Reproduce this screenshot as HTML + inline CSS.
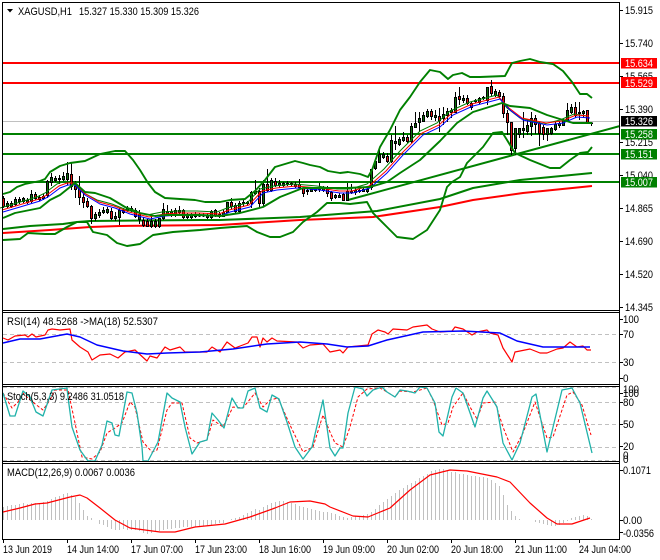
<!DOCTYPE html>
<html><head><meta charset="utf-8"><style>
html,body{margin:0;padding:0;background:#fff;width:660px;height:560px;overflow:hidden}
svg{display:block}
text{font-family:"Liberation Sans",sans-serif;font-size:11px;fill:#000}
.w{fill:#fff}
</style></head><body>
<svg width="660" height="560" viewBox="0 0 660 560" xmlns="http://www.w3.org/2000/svg">
<rect width="660" height="560" fill="#fff"/>

<!-- main chart hlines -->
<path d="M3 121.5H620" stroke="#c0c0c0" stroke-width="1" fill="none"/>
<path d="M3 63H620M3 83H620" stroke="#ff0000" stroke-width="2" fill="none"/>
<path d="M3 134H620M3 154H620M3 182H620" stroke="#008000" stroke-width="2" fill="none"/>

<!-- long MAs -->
<g fill="none" stroke-width="2" stroke-linejoin="round">
<polyline stroke="#008000" points="3,229 30,226 63,224 77,222 90,221 200,220 220,220 300,217 377,211 440,199 473,188 520,180 592,173"/>
<polyline stroke="#ff0000" points="3,233 50,230 90,227 120,226 220,225 300,220 373,217 440,207 473,200 523,193 592,186"/>
<polyline stroke="#008000" points="348,200 620,126"/>
</g>

<!-- candle wicks -->
<path shape-rendering="crispEdges" stroke="#000" fill="none" d="M3.5 196V208M7.5 201V208M11.5 201V208M15.5 197V206M19.5 197V204M23.5 197V203M27.5 198V204M31.5 190V203M35.5 192V200M39.5 195V201M43.5 194V200M47.5 180V198M51.5 173V186M55.5 176V182M59.5 175V184M63.5 172V182M67.5 162V185M71.5 162V190M75.5 181V198M79.5 176V205M83.5 190V208M87.5 198V208M91.5 205V224M95.5 212V221M99.5 209V218M103.5 207V214M107.5 207V214M111.5 208V220M115.5 212V221M119.5 208V225M123.5 208V214M127.5 206V212M131.5 206V212M135.5 208V218M139.5 210V224M143.5 217V227M147.5 219V227M151.5 216V228M155.5 219V228M159.5 218V228M163.5 203V220M167.5 205V216M171.5 209V217M175.5 208V217M179.5 206V214M183.5 209V219M187.5 213V219M191.5 213V219M195.5 212V218M199.5 213V217M203.5 213V217M207.5 213V219M211.5 210V219M215.5 209V217M219.5 212V218M223.5 210V217M227.5 202V213M231.5 198V209M235.5 203V213M239.5 201V214M243.5 200V207M247.5 201V206M251.5 191V208M255.5 180V195M259.5 188V207M263.5 180V207M267.5 169V192M271.5 178V192M275.5 178V187M279.5 180V188M283.5 182V187M287.5 181V186M291.5 182V186M295.5 182V188M299.5 179V190M303.5 187V197M307.5 188V195M311.5 188V192M315.5 187V192M319.5 183V192M323.5 186V192M327.5 186V197M331.5 191V201M335.5 194V199M339.5 193V198M343.5 193V201M347.5 183V201M351.5 184V194M355.5 188V195M359.5 188V193M363.5 187V192M367.5 188V193M371.5 169V190M375.5 160V170M379.5 150V162M383.5 152V159M387.5 153V163M391.5 135V163M395.5 126V150M399.5 137V146M403.5 132V142M407.5 135V143M411.5 123V143M415.5 112V128M419.5 112V132M423.5 112V122M427.5 109V118M431.5 109V120M435.5 110V121M439.5 108V132M443.5 107V125M447.5 108V122M451.5 108V118M455.5 92V113M459.5 87V105M463.5 95V103M467.5 95V105M471.5 102V110M475.5 99V103M479.5 97V104M483.5 96V100M487.5 87V105M491.5 80V96M495.5 89V97M499.5 90V98M503.5 93V118M507.5 110V135M511.5 122V155M515.5 128V155M519.5 128V138M523.5 112V138M527.5 120V135M531.5 112V136M535.5 115V134M539.5 122V146M543.5 125V140M547.5 128V141M551.5 127V135M555.5 122V131M559.5 121V128M563.5 119V126M567.5 103V122M571.5 104V114M575.5 102V118M579.5 102V120M583.5 110V118M587.5 110V124M591.5 122V126"/>
<!-- red bodies -->
<path shape-rendering="crispEdges" stroke="#000" fill="#e01010" d="M2.5 198.5h2v8h-2zM34.5 194.5h2v4h-2zM70.5 174.5h2v12h-2zM74.5 186.5h2v3h-2zM78.5 188.5h2v9h-2zM82.5 197.5h2v5h-2zM86.5 201.5h2v5h-2zM90.5 206.5h2v12h-2zM110.5 211.5h2v7h-2zM134.5 210.5h2v6h-2zM142.5 220.5h2v5h-2zM146.5 221.5h2v5h-2zM182.5 210.5h2v7h-2zM214.5 210.5h2v5h-2zM230.5 202.5h2v4h-2zM234.5 205.5h2v6h-2zM258.5 191.5h2v12h-2zM266.5 184.5h2v6h-2zM274.5 181.5h2v4h-2zM298.5 184.5h2v3h-2zM302.5 188.5h2v5h-2zM326.5 189.5h2v4h-2zM330.5 192.5h2v6h-2zM342.5 194.5h2v6h-2zM386.5 156.5h2v5h-2zM406.5 137.5h2v4h-2zM430.5 111.5h2v5h-2zM438.5 116.5h2v4h-2zM458.5 96.5h2v3h-2zM466.5 98.5h2v5h-2zM470.5 103.5h2v4h-2zM490.5 86.5h2v7h-2zM498.5 92.5h2v4h-2zM502.5 96.5h2v17h-2zM506.5 113.5h2v9h-2zM510.5 122.5h2v28h-2zM534.5 118.5h2v6h-2zM538.5 123.5h2v10h-2zM542.5 127.5h2v7h-2zM574.5 107.5h2v8h-2zM586.5 110.5h2v13h-2z"/>
<!-- green bodies -->
<path shape-rendering="crispEdges" stroke="#000" fill="#0a6e0a" d="M6.5 203.5h2v3h-2zM10.5 203.5h2v3h-2zM14.5 199.5h2v5h-2zM18.5 199.5h2v2h-2zM22.5 198.5h2v3h-2zM26.5 200.5h2v2h-2zM30.5 194.5h2v7h-2zM38.5 197.5h2v2h-2zM42.5 196.5h2v2h-2zM46.5 181.5h2v14h-2zM50.5 177.5h2v5h-2zM54.5 178.5h2v2h-2zM58.5 178.5h2v1h-2zM62.5 176.5h2v3h-2zM66.5 173.5h2v6h-2zM94.5 214.5h2v4h-2zM98.5 212.5h2v3h-2zM102.5 210.5h2v2h-2zM106.5 209.5h2v3h-2zM114.5 216.5h2v2h-2zM118.5 210.5h2v7h-2zM122.5 210.5h2v2h-2zM126.5 208.5h2v2h-2zM130.5 208.5h2v2h-2zM138.5 214.5h2v5h-2zM150.5 221.5h2v5h-2zM154.5 221.5h2v5h-2zM158.5 218.5h2v8h-2zM162.5 209.5h2v9h-2zM166.5 211.5h2v3h-2zM170.5 211.5h2v4h-2zM174.5 210.5h2v5h-2zM178.5 210.5h2v2h-2zM186.5 215.5h2v2h-2zM190.5 215.5h2v2h-2zM194.5 214.5h2v2h-2zM198.5 215h2v1h-2zM202.5 215h2v1h-2zM206.5 215.5h2v2h-2zM210.5 211.5h2v6h-2zM218.5 214.5h2v2h-2zM222.5 212.5h2v4h-2zM226.5 202.5h2v10h-2zM238.5 203.5h2v8h-2zM242.5 202.5h2v1h-2zM246.5 202.5h2v1h-2zM250.5 192.5h2v11h-2zM254.5 191.5h2v2h-2zM262.5 184.5h2v19h-2zM270.5 180.5h2v10h-2zM278.5 183.5h2v2h-2zM282.5 183.5h2v2h-2zM286.5 183.5h2v1h-2zM290.5 183.5h2v1h-2zM294.5 184.5h2v2h-2zM306.5 190.5h2v1h-2zM310.5 189.5h2v2h-2zM314.5 188.5h2v2h-2zM318.5 188.5h2v1h-2zM322.5 187.5h2v3h-2zM334.5 195.5h2v2h-2zM338.5 195.5h2v2h-2zM346.5 191.5h2v9h-2zM350.5 191.5h2v1h-2zM354.5 190.5h2v2h-2zM358.5 190.5h2v1h-2zM362.5 189.5h2v2h-2zM366.5 189.5h2v2h-2zM370.5 169.5h2v18h-2zM374.5 161.5h2v7h-2zM378.5 154.5h2v8h-2zM382.5 154.5h2v3h-2zM390.5 140.5h2v21h-2zM394.5 141.5h2v2h-2zM398.5 139.5h2v5h-2zM402.5 137.5h2v3h-2zM410.5 126.5h2v15h-2zM414.5 123.5h2v4h-2zM418.5 118.5h2v4h-2zM422.5 115.5h2v6h-2zM426.5 111.5h2v5h-2zM434.5 115.5h2v2h-2zM442.5 114.5h2v4h-2zM446.5 111.5h2v4h-2zM450.5 110.5h2v2h-2zM454.5 97.5h2v15h-2zM462.5 98.5h2v2h-2zM474.5 100.5h2v1h-2zM478.5 98.5h2v4h-2zM482.5 97.5h2v1h-2zM486.5 87.5h2v13h-2zM494.5 91.5h2v4h-2zM514.5 128.5h2v20h-2zM518.5 128.5h2v6h-2zM522.5 128.5h2v2h-2zM526.5 125.5h2v6h-2zM530.5 118.5h2v8h-2zM546.5 128.5h2v6h-2zM550.5 128.5h2v5h-2zM554.5 124.5h2v5h-2zM558.5 123.5h2v2h-2zM562.5 120.5h2v5h-2zM566.5 110.5h2v11h-2zM570.5 107.5h2v5h-2zM578.5 112.5h2v1h-2zM582.5 111.5h2v2h-2zM590.5 123h2v.5h-2z"/>

<!-- EMA ribbon -->
<g fill="none" stroke-width="1">
<polyline transform="translate(-3,-4)" stroke="#008000" points="3,212 20,207 40,201 48,197 60,188 68,185 75,187 85,196 100,204 115,208 130,214 150,219 165,216 180,215 200,215 220,216 230,212 250,207 263,193 277,190 297,188 320,190 340,193 353,193 370,188 387,173 403,155 423,135 440,127 453,115 473,106 500,99 510,112 523,122 547,128 563,124 577,118 590,120"/>
<polyline transform="translate(-1,-2)" stroke="#ff0000" points="3,212 20,207 40,201 48,197 60,188 68,185 75,185 85,195 100,204 115,208 130,214 150,219 165,216 180,215 200,215 220,216 230,212 250,207 263,193 277,190 297,188 320,190 340,193 353,193 370,188 387,173 403,155 423,135 440,127 453,115 473,106 500,99 510,110 523,120 547,125 563,123 577,117 590,118"/>
<polyline stroke="#0000ff" points="3,212 20,207 40,201 48,197 60,188 68,185 75,185 85,195 100,204 115,208 130,214 150,219 165,216 180,215 200,215 220,216 230,212 250,207 263,193 277,190 297,188 320,190 340,193 353,193 370,188 387,173 403,155 423,135 440,127 453,115 473,106 500,99 510,110 523,120 547,125 563,123 577,117 590,118"/>
</g>

<!-- Bollinger bands -->
<g fill="none" stroke="#008000" stroke-width="1.9" stroke-linejoin="round">
<polyline points="3,194 10,192 17,187 25,184 40,181 45,179 50,172 60,166 70,163 85,161 100,154 115,151 125,151 133,160 140,170 148,183 155,192 165,198 180,199 195,200 205,202 220,202 230,200 245,199 255,191 265,180 275,167 285,164 295,161 303,163 310,165 320,167 328,171 340,173 348,172 360,174 368,177 372,170 380,147 390,130 400,110 410,97 420,82 430,70 440,72 448,79 453,75 462,73 470,77 480,77 505,76 512,63 520,61 530,59 540,62 553,64 563,71 572,82 580,94 587,94 592,98"/>
<polyline points="3,218 15,213 25,211 40,208 50,200 60,195 70,187 75,183 85,192 95,193 110,198 125,207 140,213 155,216 167,215 200,215 220,216 240,213 263,207 280,197 303,188 320,188 347,188 370,187 387,182 400,173 420,160 440,141 457,123 473,112 502,103 510,106 530,108 547,115 563,120 573,123 592,123"/>
<polyline points="3,240 20,239 28,233 45,234 55,234 67,227 77,222 87,222 93,232 107,235 117,243 127,246 140,244 153,235 173,232 200,230 220,228 233,227 247,226 257,232 270,237 280,237 293,232 303,222 317,212 327,203 340,203 350,204 367,202 373,213 387,227 397,237 413,239 427,230 440,210 447,187 452,182 460,177 467,163 483,147 493,133 502,132 507,140 515,153 530,160 550,168 560,168 570,160 580,153 588,152 592,147"/>
</g>

<!-- RSI -->
<path d="M3 334.5H620M3 362.5H620" stroke="#c0c0c0" stroke-dasharray="4 3" fill="none"/>
<g fill="none" stroke-linejoin="round" stroke-width="1.2">
<polyline stroke="#ff0000" points="3,338 8,340 15,336 25,335 28,337 32,334 36,337 45,335 48,330 52,329 60,330 70,329 72,340 80,347 88,352 92,360 100,355 110,354 118,358 125,352 135,350 147,361 150,356 157,358 165,347 170,350 180,347 185,352 205,352 207,352 212,347 220,352 227,342 235,348 248,343 252,337 257,337 260,347 263,338 267,342 272,338 277,341 297,342 303,348 310,345 323,344 330,352 340,350 343,353 348,347 368,345 372,334 378,330 385,332 388,334 393,329 407,330 413,327 427,325 432,329 440,332 452,331 455,327 463,329 472,335 477,332 487,330 490,333 498,335 503,348 512,362 515,352 530,349 540,353 547,353 557,349 563,348 570,342 577,347 583,346 587,350 591,350"/>
<polyline stroke="#0000ff" stroke-width="1.5" points="3,343 20,339 40,339 67,334 80,337 97,345 123,351 147,354 167,353 200,352 233,349 267,344 300,342 327,344 347,347 368,346 387,340 423,332 463,331 500,333 517,341 543,347 590,347"/>
</g>

<!-- Stochastic -->
<path d="M3 387.5H620M3 402.5H620M3 424.5H620M3 447.5H620M3 460.5H620" stroke="#c0c0c0" stroke-dasharray="4 3" fill="none"/>
<g fill="none" stroke-linejoin="round">
<polyline stroke="#ff0000" stroke-dasharray="3 2" points="3,393 12,408 18,402 23,393 30,400 43,410 50,400 55,390 68,390 75,423 82,457 92,459 100,452 107,433 115,428 122,423 130,402 135,407 143,442 152,452 157,450 167,410 172,403 182,403 190,438 197,443 207,440 213,420 223,427 233,407 243,408 255,393 263,407 270,400 278,398 290,425 303,452 313,447 323,415 330,432 335,443 343,447 350,427 358,397 367,389 380,388 387,392 395,397 400,391 413,392 427,388 433,400 442,425 448,423 453,407 463,393 470,407 477,419 483,403 495,402 503,427 513,452 523,433 535,402 547,438 553,437 567,395 573,392 582,405 591,435"/>
<polyline stroke="#20b2aa" stroke-width="1.3" points="3,393 10,416 15,416 23,391 30,397 36,412 43,416 52,390 67,388 68,397 72,427 80,450 88,461 95,461 102,445 107,421 112,423 115,435 119,436 127,392 132,393 137,413 142,447 143,461 148,461 158,442 167,393 172,398 180,402 185,427 192,454 200,442 207,440 212,413 218,420 224,428 232,398 238,408 243,408 248,391 255,388 260,408 267,412 272,395 279,399 287,422 295,447 303,459 312,447 323,400 330,448 335,456 340,448 343,448 348,413 355,387 363,389 367,396 373,390 382,387 387,392 395,397 400,390 407,391 415,393 420,387 427,388 435,403 439,432 443,436 452,397 456,388 463,393 475,427 483,398 487,391 497,407 503,443 512,460 520,443 532,397 536,394 547,452 562,390 572,388 580,403 592,453"/>
</g>

<!-- MACD histogram -->
<path stroke="#c0c0c0" fill="none" shape-rendering="crispEdges" d="M3.5 520V507M7.5 520V506M11.5 520V505M15.5 520V505M19.5 520V504M23.5 520V503M27.5 520V504M31.5 520V503M35.5 520V503M39.5 520V503M43.5 520V502M47.5 520V501M51.5 520V499M55.5 520V497M59.5 520V496M63.5 520V494M67.5 520V493M71.5 520V495M75.5 520V497M79.5 520V503M83.5 520V510M87.5 520V516M91.5 520V518M99.5 520V524M103.5 520V525M107.5 520V527M111.5 520V529M115.5 520V530M119.5 520V530M123.5 520V529M127.5 520V530M131.5 520V530M135.5 520V530M139.5 520V531M143.5 520V533M147.5 520V534M151.5 520V533M155.5 520V532M159.5 520V531M163.5 520V530M167.5 520V529M171.5 520V529M175.5 520V528M179.5 520V528M183.5 520V527M187.5 520V527M191.5 520V527M195.5 520V527M199.5 520V526M203.5 520V526M207.5 520V526M211.5 520V525M215.5 520V524M219.5 520V523M223.5 520V523M231.5 520V519M235.5 520V518M239.5 520V517M243.5 520V515M247.5 520V513M251.5 520V511M255.5 520V509M259.5 520V510M263.5 520V507M267.5 520V505M271.5 520V503M275.5 520V502M279.5 520V501M283.5 520V501M287.5 520V502M291.5 520V503M295.5 520V504M299.5 520V506M303.5 520V507M307.5 520V508M311.5 520V509M315.5 520V510M319.5 520V511M323.5 520V512M327.5 520V512M331.5 520V513M335.5 520V514M339.5 520V516M343.5 520V517M347.5 520V518M351.5 520V517M355.5 520V516M359.5 520V516M363.5 520V515M367.5 520V514M371.5 520V512M375.5 520V509M379.5 520V505M383.5 520V502M387.5 520V499M391.5 520V496M395.5 520V493M399.5 520V490M403.5 520V488M407.5 520V485M411.5 520V483M415.5 520V481M419.5 520V478M423.5 520V476M427.5 520V474M431.5 520V471M435.5 520V470M439.5 520V469M443.5 520V469M447.5 520V470M451.5 520V472M455.5 520V472M459.5 520V474M463.5 520V474M467.5 520V475M471.5 520V476M475.5 520V476M479.5 520V477M483.5 520V477M487.5 520V478M491.5 520V480M495.5 520V483M499.5 520V486M503.5 520V495M507.5 520V505M511.5 520V511M515.5 520V516M519.5 520V519M535.5 520V522M539.5 520V523M543.5 520V524M547.5 520V525M551.5 520V526M555.5 520V526M559.5 520V525M563.5 520V523M567.5 520V521M571.5 520V518M575.5 520V517M579.5 520V516M583.5 520V515M587.5 520V516M591.5 520V519"/>
<polyline fill="none" stroke="#ff0000" stroke-width="1.2" stroke-linejoin="round" points="3,512 20,508 35,504 47,503 70,497 80,495 87,498 100,508 115,520 130,528 145,530 160,532 175,532 195,527 225,524 250,517 275,508 290,502 310,501 325,504 330,507 353,516 368,517 390,508 410,490 430,475 450,470 467,471 497,477 510,482 530,503 547,518 557,524 572,524 590,518"/>

<!-- frame -->
<g shape-rendering="crispEdges" stroke="#000" fill="none">
<path d="M2.5 2V539.5M2 2.5H620M619.5 2V539.5M2 539.5H620"/>
<path d="M2 310.5H620M2 312.5H620M2 384.5H620M2 386.5H620M2 461.5H620M2 463.5H620"/>
<path d="M620 10.5h3M620 43.5h3M620 76.5h3M620 109.5h3M620 142.5h3M620 175.5h3M620 208.5h3M620 241.5h3M620 274.5h3M620 307.5h3M620 319.5h3M620 334.5h3M620 362.5h3M620 378.5h3M620 393.5h3M620 402.5h3M620 424.5h3M620 446.5h3M620 470.5h3M620 520.5h3M620 532.5h3"/>
<path d="M3.5 540v3M67.5 540v3M131.5 540v3M195.5 540v3M259.5 540v3M323.5 540v3M387.5 540v3M451.5 540v3M515.5 540v3M579.5 540v3"/>
</g>

<!-- labels -->
<path d="M7 9h6l-3 3.5z" fill="#000"/>
<text x="18" y="15" textLength="54" lengthAdjust="spacingAndGlyphs">XAGUSD,H1</text>
<text x="79" y="15" textLength="120" lengthAdjust="spacingAndGlyphs">15.327 15.330 15.309 15.326</text>
<text x="7" y="325" textLength="151" lengthAdjust="spacingAndGlyphs">RSI(14) 48.5268  -&gt;MA(18) 52.5307</text>
<text x="7" y="400" textLength="117" lengthAdjust="spacingAndGlyphs">Stoch(5,3,3) 9.2486 31.0518</text>
<text x="7" y="476" textLength="128" lengthAdjust="spacingAndGlyphs">MACD(12,26,9) 0.0067 0.0036</text>

<g>
<text x="625" y="14" textLength="28" lengthAdjust="spacingAndGlyphs">15.915</text>
<text x="625" y="47" textLength="28" lengthAdjust="spacingAndGlyphs">15.740</text>
<text x="625" y="80" textLength="28" lengthAdjust="spacingAndGlyphs">15.565</text>
<text x="625" y="113" textLength="28" lengthAdjust="spacingAndGlyphs">15.390</text>
<text x="625" y="146" textLength="28" lengthAdjust="spacingAndGlyphs">15.215</text>
<text x="625" y="179" textLength="28" lengthAdjust="spacingAndGlyphs">15.040</text>
<text x="625" y="212" textLength="28" lengthAdjust="spacingAndGlyphs">14.865</text>
<text x="625" y="245" textLength="28" lengthAdjust="spacingAndGlyphs">14.690</text>
<text x="625" y="278" textLength="28" lengthAdjust="spacingAndGlyphs">14.520</text>
<text x="625" y="311" textLength="28" lengthAdjust="spacingAndGlyphs">14.345</text>

<rect x="621" y="58" width="36" height="10.500" fill="#ff0000"/>
<text class="w" x="625" y="67" textLength="28" lengthAdjust="spacingAndGlyphs">15.634</text>
<rect x="621" y="77" width="36" height="11" fill="#ff0000"/>
<text class="w" x="625" y="87" textLength="28" lengthAdjust="spacingAndGlyphs">15.529</text>
<rect x="621" y="116" width="36" height="10.500" fill="#000"/>
<text class="w" x="625" y="125" textLength="28" lengthAdjust="spacingAndGlyphs">15.326</text>
<rect x="621" y="129" width="36" height="10.500" fill="#008000"/>
<text class="w" x="625" y="138" textLength="28" lengthAdjust="spacingAndGlyphs">15.258</text>
<rect x="621" y="149" width="36" height="10.500" fill="#008000"/>
<text class="w" x="625" y="158" textLength="28" lengthAdjust="spacingAndGlyphs">15.151</text>
<rect x="621" y="177" width="36" height="10.500" fill="#008000"/>
<text class="w" x="625" y="186" textLength="28" lengthAdjust="spacingAndGlyphs">15.007</text>

<text x="623" y="323" textLength="16" lengthAdjust="spacingAndGlyphs">100</text>
<text x="623" y="338" textLength="11" lengthAdjust="spacingAndGlyphs">70</text>
<text x="623" y="366" textLength="11" lengthAdjust="spacingAndGlyphs">30</text>
<text x="623" y="382" textLength="5.500" lengthAdjust="spacingAndGlyphs">0</text>

<text x="623" y="393" textLength="16" lengthAdjust="spacingAndGlyphs">100</text>
<text x="623" y="397" textLength="16" lengthAdjust="spacingAndGlyphs">100</text>
<text x="623" y="406" textLength="11" lengthAdjust="spacingAndGlyphs">80</text>
<text x="623" y="428" textLength="11" lengthAdjust="spacingAndGlyphs">50</text>
<text x="623" y="450" textLength="11" lengthAdjust="spacingAndGlyphs">20</text>
<text x="623" y="459" textLength="5.500" lengthAdjust="spacingAndGlyphs">0</text>
<text x="623" y="463" textLength="5.500" lengthAdjust="spacingAndGlyphs">0</text>

<text x="623" y="474" textLength="28" lengthAdjust="spacingAndGlyphs">0.1071</text>
<text x="623" y="524" textLength="19" lengthAdjust="spacingAndGlyphs">0.00</text>
<text x="623" y="537" textLength="31" lengthAdjust="spacingAndGlyphs">-0.0356</text>

<text x="3" y="553" textLength="49" lengthAdjust="spacingAndGlyphs">13 Jun 2019</text>
<text x="67" y="553" textLength="52" lengthAdjust="spacingAndGlyphs">14 Jun 14:00</text>
<text x="131" y="553" textLength="52" lengthAdjust="spacingAndGlyphs">17 Jun 07:00</text>
<text x="195" y="553" textLength="52" lengthAdjust="spacingAndGlyphs">17 Jun 23:00</text>
<text x="259" y="553" textLength="52" lengthAdjust="spacingAndGlyphs">18 Jun 16:00</text>
<text x="323" y="553" textLength="52" lengthAdjust="spacingAndGlyphs">19 Jun 09:00</text>
<text x="387" y="553" textLength="52" lengthAdjust="spacingAndGlyphs">20 Jun 02:00</text>
<text x="451" y="553" textLength="52" lengthAdjust="spacingAndGlyphs">20 Jun 18:00</text>
<text x="515" y="553" textLength="52" lengthAdjust="spacingAndGlyphs">21 Jun 11:00</text>
<text x="579" y="553" textLength="52" lengthAdjust="spacingAndGlyphs">24 Jun 04:00</text>
</g>
</svg>
</body></html>
